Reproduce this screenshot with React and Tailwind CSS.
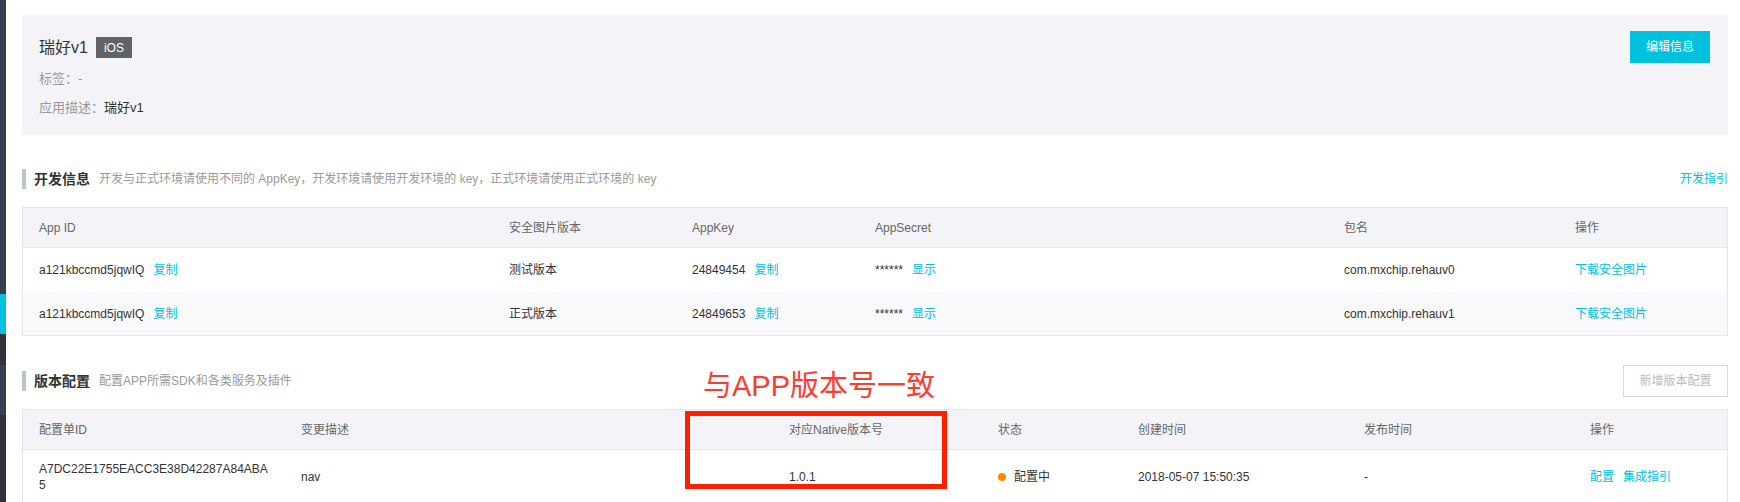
import React from "react";

const FONT = { fontFamily: '"Liberation Sans", "Noto Sans CJK SC", Arial, sans-serif' };

function SectionTitle({ title, desc }) {
  return (
    <div className="flex items-center">
      <div className="w-[4px] h-[20px] bg-[#b9c6cf]" />
      <span className="ml-[8px] text-[14px] font-bold text-[#333]">{title}</span>
      <span className="ml-[9px] text-[12px] text-[#999]">{desc}</span>
    </div>
  );
}

const Link = ({ children, className = "" }) => (
  <span className={"text-[#00c1de] " + className}>{children}</span>
);

export default function App() {
  return (
    <div className="relative flex h-[502px] w-[1740px] overflow-hidden bg-white" style={FONT}>
      {/* sidebar strip */}
      <div className="flex w-[6px] flex-col shrink-0">
        <div className="h-[294px] bg-[#393e50]" />
        <div className="h-[40px] bg-[#00c1de]" />
        <div className="h-[31px] bg-[#303337]" />
        <div className="h-[50px] bg-[#393e50]" />
        <div className="flex-1 bg-[#303337]" />
      </div>

      <div className="flex-1 pl-[16px] pr-[12px]">
        {/* top card */}
        <div className="mt-[15px] flex h-[120px] justify-between bg-[#f4f4f8] pl-[17px] pr-[18px]">
          <div className="pt-[22px]">
            <div className="flex items-center gap-[8px]">
              <span className="text-[16px] leading-[21px] text-[#333]">瑞好v1</span>
              <span className="flex h-[21px] items-center bg-[#606367] px-[8px] text-[12px] text-white">iOS</span>
            </div>
            <div className="mt-[11px] text-[13px] leading-[20px] text-[#999]">标签：-</div>
            <div className="mt-[9px] text-[13px] leading-[20px] text-[#999]">
              应用描述：<span className="text-[#333]">瑞好v1</span>
            </div>
          </div>
          <div className="pt-[16px]">
            <button className="h-[32px] w-[80px] bg-[#00c1de] text-[12px] text-white">编辑信息</button>
          </div>
        </div>

        {/* section 1 */}
        <div className="mt-[34px] flex h-[20px] items-center justify-between">
          <SectionTitle
            title="开发信息"
            desc="开发与正式环境请使用不同的 AppKey，开发环境请使用开发环境的 key，正式环境请使用正式环境的 key"
          />
          <Link className="text-[12px]">开发指引</Link>
        </div>

        <div className="mt-[18px] border border-[#e5e6e9] text-[12px]">
          <div className="grid h-[40px] grid-cols-[470px_183px_183px_469px_231px_1fr] items-center border-b border-[#e5e6e9] bg-[#f4f4f8] text-[#666]">
            <div className="pl-[16px]">App ID</div>
            <div className="pl-[16px]">安全图片版本</div>
            <div className="pl-[16px]">AppKey</div>
            <div className="pl-[16px]">AppSecret</div>
            <div className="pl-[16px]">包名</div>
            <div className="pl-[16px]">操作</div>
          </div>
          <div className="grid h-[44px] grid-cols-[470px_183px_183px_469px_231px_1fr] items-center text-[#333]">
            <div className="pl-[16px]">a121kbccmd5jqwIQ<Link className="ml-[9px]">复制</Link></div>
            <div className="pl-[16px]">测试版本</div>
            <div className="pl-[16px]">24849454<Link className="ml-[9px]">复制</Link></div>
            <div className="pl-[16px]">******<Link className="ml-[9px]">显示</Link></div>
            <div className="pl-[16px]">com.mxchip.rehauv0</div>
            <div className="pl-[16px]"><Link>下载安全图片</Link></div>
          </div>
          <div className="grid h-[43px] grid-cols-[470px_183px_183px_469px_231px_1fr] items-center bg-[#f9f9fb] text-[#333]">
            <div className="pl-[16px]">a121kbccmd5jqwIQ<Link className="ml-[9px]">复制</Link></div>
            <div className="pl-[16px]">正式版本</div>
            <div className="pl-[16px]">24849653<Link className="ml-[9px]">复制</Link></div>
            <div className="pl-[16px]">******<Link className="ml-[9px]">显示</Link></div>
            <div className="pl-[16px]">com.mxchip.rehauv1</div>
            <div className="pl-[16px]"><Link>下载安全图片</Link></div>
          </div>
        </div>

        {/* section 2 */}
        <div className="mt-[29px] flex h-[32px] items-center justify-between">
          <SectionTitle title="版本配置" desc="配置APP所需SDK和各类服务及插件" />
          <button className="h-[32px] w-[105px] border border-[#d9d9dc] bg-white text-[12px] text-[#bbb]">新增版本配置</button>
        </div>

        <div className="mt-[12px] border border-[#e5e6e9] text-[12px]">
          <div className="grid h-[40px] grid-cols-[262px_488px_209px_140px_226px_226px_1fr] items-center border-b border-[#e5e6e9] bg-[#f4f4f8] text-[#666]">
            <div className="pl-[16px]">配置单ID</div>
            <div className="pl-[16px]">变更描述</div>
            <div className="pl-[16px]">对应Native版本号</div>
            <div className="pl-[16px]">状态</div>
            <div className="pl-[16px]">创建时间</div>
            <div className="pl-[16px]">发布时间</div>
            <div className="pl-[16px]">操作</div>
          </div>
          <div className="grid min-h-[54px] grid-cols-[262px_488px_209px_140px_226px_226px_1fr] items-center text-[#333]">
            <div className="break-all pl-[16px] pr-[16px] leading-[16px]">A7DC22E1755EACC3E38D42287A84ABA5</div>
            <div className="pl-[16px]">nav</div>
            <div className="pl-[16px]">1.0.1</div>
            <div className="flex items-center pl-[16px]">
              <span className="h-[8px] w-[8px] rounded-full bg-[#ff8a00]" />
              <span className="ml-[8px]">配置中</span>
            </div>
            <div className="pl-[16px]">2018-05-07 15:50:35</div>
            <div className="pl-[16px]">-</div>
            <div className="pl-[16px]">
              <Link>配置</Link>
              <Link className="ml-[9px]">集成指引</Link>
            </div>
          </div>
        </div>
      </div>

      {/* annotation overlay */}
      <div className="absolute left-[703px] top-[371px] text-[29px] leading-[30px] text-[#ff3b30]">与APP版本号一致</div>
      <div className="absolute left-[685px] top-[411px] h-[78px] w-[262px] border-[5px] border-[#ff1f00]" />
    </div>
  );
}
